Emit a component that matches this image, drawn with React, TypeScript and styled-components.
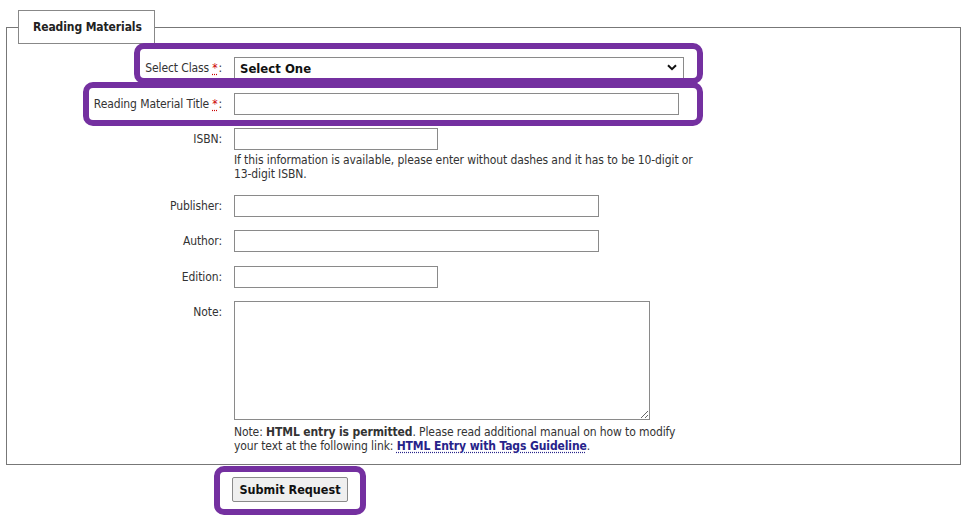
import styled, { createGlobalStyle } from "styled-components";

// #region ##################################################################################### STYLES
const Global = createGlobalStyle`
  html, body {
    margin: 0;
    padding: 0;
    background: #fff;
  }
  body {
    font-family: "DejaVu Sans Condensed", Tahoma, "Liberation Sans", sans-serif;
    font-size: 12px;
    letter-spacing: -0.1px;
    color: #333;
  }
`;

const Page = styled.div`
  position: relative;
  width: 969px;
  height: 523px;
  padding: 10px 8px 0 6px;
  box-sizing: border-box;
`;

const Fieldset = styled.fieldset`
  margin: 0;
  padding: 13px 0 11px 0;
  border: 1px solid #777;
  min-inline-size: 0;
`;

const Legend = styled.legend`
  margin-left: 11px;
  padding: 9px 12px 8px 14px;
  border: 1px solid #888;
  background: #fff;
  font-weight: bold;
  color: #222;
  line-height: 15px;
`;

const Form = styled.div`
  display: grid;
  grid-template-columns: 215px 1fr;
  column-gap: 12px;
  row-gap: 13.5px;
  align-items: start;
`;

const Label = styled.label`
  text-align: right;
  padding-top: 4px;
  line-height: 14px;
  white-space: nowrap;
`;

const Req = styled.abbr`
  color: #c00;
  text-decoration: underline dotted #c00;
  text-underline-offset: 2px;
  cursor: help;
  margin-left: 3px;
  margin-right: 1px;
`;

const Field = styled.div`
  display: flex;
  flex-direction: column;
  align-items: flex-start;
`;

const TextInput = styled.input<{ $w: number }>`
  box-sizing: border-box;
  width: ${(p) => p.$w}px;
  height: 22px;
  margin: 0;
  padding: 2px 4px;
  border: 1px solid #8a8a8a;
  border-radius: 0;
  font: inherit;
`;

const SelectWrap = styled.div`
  position: relative;
  width: 450px;
  height: 22px;
`;

const Select = styled.select`
  appearance: none;
  box-sizing: border-box;
  width: 100%;
  height: 22px;
  margin: 0;
  padding: 0 24px 0 5px;
  border: 1px solid #8a8a8a;
  border-radius: 0;
  background: #fff;
  font-family: inherit;
  font-size: 13px;
  font-weight: bold;
  letter-spacing: 0;
  color: #111;
`;

const Chevron = styled.svg`
  position: absolute;
  right: 7px;
  top: 7px;
  pointer-events: none;
`;

const Hint = styled.div<{ $w: number; $gap: number }>`
  width: ${(p) => p.$w}px;
  margin-top: ${(p) => p.$gap}px;
  line-height: 14px;
`;

const NoteArea = styled.textarea`
  box-sizing: border-box;
  width: 416px;
  height: 119px;
  margin: 0;
  padding: 2px 4px;
  border: 1px solid #8a8a8a;
  border-radius: 0;
  font: inherit;
  resize: both;
`;

const Guide = styled.a`
  font-weight: bold;
  color: #27238a;
  text-decoration: underline dotted #27238a;
  text-underline-offset: 2px;
`;

const Actions = styled.div`
  padding: 12px 0 0 226px;
`;

const Button = styled.button`
  box-sizing: border-box;
  height: 25px;
  width: 116px;
  padding: 0;
  border: 1px solid #8a8a8a;
  border-radius: 2px;
  background: #efefef;
  font-family: inherit;
  font-size: 12.5px;
  font-weight: bold;
  letter-spacing: 0;
  color: #111;
`;

const Highlight = styled.div<{ $x: number; $y: number; $w: number; $h: number }>`
  position: absolute;
  left: ${(p) => p.$x}px;
  top: ${(p) => p.$y}px;
  width: ${(p) => p.$w}px;
  height: ${(p) => p.$h}px;
  box-sizing: border-box;
  border: 6px solid #7430a0;
  border-radius: 10px;
  pointer-events: none;
`;
// #endregion

// #region ##################################################################################### COMPONENT
const App = () => {
  return (
    <Page>
      <Global />
      <Fieldset>
        <Legend>Reading Materials</Legend>
        <Form>
          <Label>
            Select Class<Req title="required">*</Req>:
          </Label>
          <Field>
            <SelectWrap>
              <Select defaultValue="">
                <option value="">Select One</option>
              </Select>
              <Chevron width="10" height="7" viewBox="0 0 10 7">
                <path d="M1 1.2 L5 5.2 L9 1.2" fill="none" stroke="#111" strokeWidth="2" />
              </Chevron>
            </SelectWrap>
          </Field>

          <Label>
            Reading Material Title<Req title="required">*</Req>:
          </Label>
          <Field>
            <TextInput $w={445} />
          </Field>

          <Label>ISBN:</Label>
          <Field>
            <TextInput $w={204} />
            <Hint $w={470} $gap={3}>
              If this information is available, please enter without dashes and it has to be 10-digit or
              13-digit ISBN.
            </Hint>
          </Field>

          <Label>Publisher:</Label>
          <Field>
            <TextInput $w={365} />
          </Field>

          <Label>Author:</Label>
          <Field>
            <TextInput $w={365} />
          </Field>

          <Label>Edition:</Label>
          <Field>
            <TextInput $w={204} />
          </Field>

          <Label>Note:</Label>
          <Field>
            <NoteArea />
            <Hint $w={460} $gap={5}>
              Note: <b>HTML entry is permitted</b>. Please read additional manual on how to modify your
              text at the following link: <Guide href="#">HTML Entry with Tags Guideline</Guide>.
            </Hint>
          </Field>
        </Form>
      </Fieldset>

      <Actions>
        <Button type="button">Submit Request</Button>
      </Actions>

      <Highlight $x={134} $y={43} $w={569} $h={41} />
      <Highlight $x={83} $y={82} $w={620} $h={44} />
      <Highlight $x={214} $y={466} $w={152} $h={49} />
    </Page>
  );
};
// #endregion

export default App;
